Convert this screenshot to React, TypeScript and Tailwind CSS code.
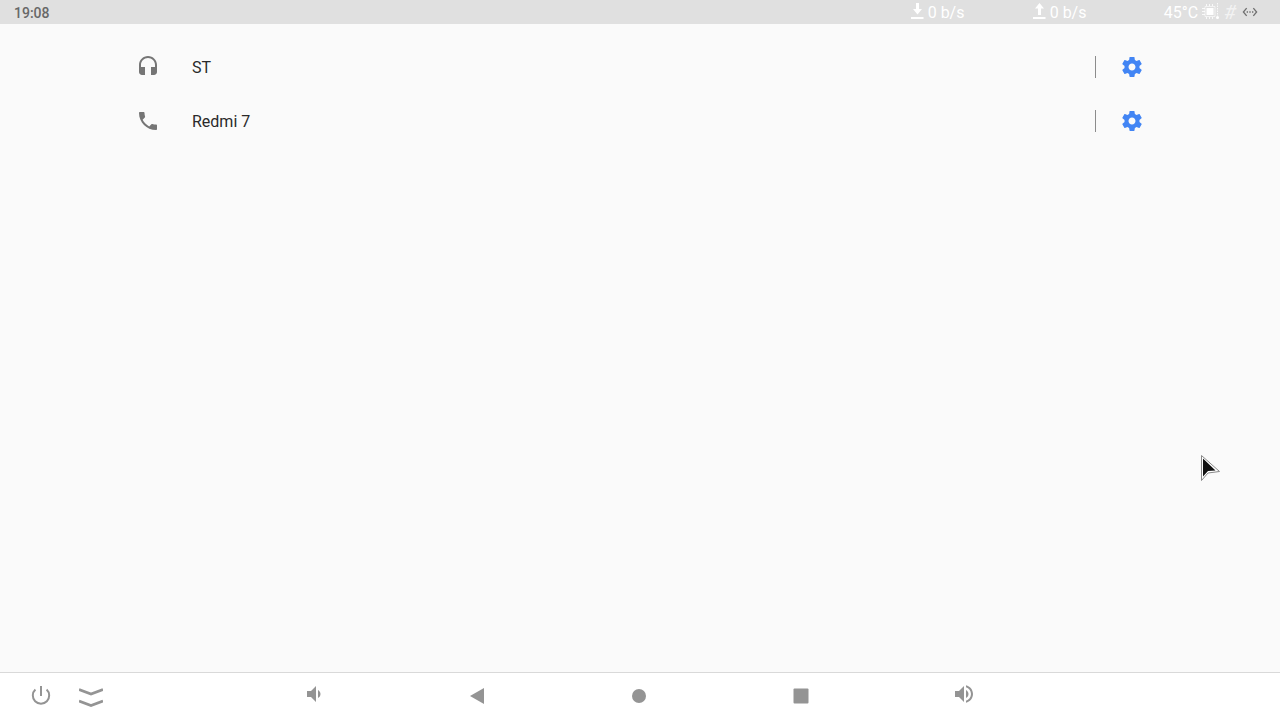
import React from "react";

type Device = {
  name: string;
  icon: string;
};

const HEADSET =
  "M12 1c-4.97 0-9 4.03-9 9v7c0 1.66 1.34 3 3 3h3v-8H5v-2c0-3.87 3.13-7 7-7s7 3.13 7 7v2h-4v8h3c1.66 0 3-1.34 3-3v-7c0-4.97-4.03-9-9-9z";
const PHONE =
  "M6.62 10.79c1.44 2.83 3.76 5.14 6.59 6.59l2.2-2.2c.27-.27.67-.36 1.02-.24 1.12.37 2.33.57 3.57.57.55 0 1 .45 1 1V20c0 .55-.45 1-1 1-9.39 0-17-7.61-17-17 0-.55.45-1 1-1h3.5c.55 0 1 .45 1 1 0 1.25.2 2.45.57 3.57.11.35.03.74-.25 1.02l-2.2 2.2z";
const GEAR =
  "M19.43 12.98c.04-.32.07-.64.07-.98s-.03-.66-.07-.98l2.11-1.65c.19-.15.24-.42.12-.64l-2-3.46c-.12-.22-.39-.3-.61-.22l-2.49 1c-.52-.4-1.08-.73-1.69-.98l-.38-2.65C14.46 2.18 14.25 2 14 2h-4c-.25 0-.46.18-.49.42l-.38 2.65c-.61.25-1.17.59-1.69.98l-2.49-1c-.23-.09-.49 0-.61.22l-2 3.46c-.13.22-.07.49.12.64l2.11 1.65c-.04.32-.07.65-.07.98s.03.66.07.98l-2.11 1.65c-.19.15-.24.42-.12.64l2 3.46c.12.22.39.3.61.22l2.49-1c.52.4 1.08.73 1.69.98l.38 2.65c.03.24.24.42.49.42h4c.25 0 .46-.18.49-.42l.38-2.65c.61-.25 1.17-.59 1.69-.98l2.49 1c.23.09.49 0 .61-.22l2-3.46c.12-.22.07-.49-.12-.64l-2.11-1.65zM12 15.5c-1.93 0-3.5-1.57-3.5-3.5s1.57-3.5 3.5-3.5 3.5 1.57 3.5 3.5-1.57 3.5-3.5 3.5z";
const ETHERNET =
  "M7.77 6.76L6.23 5.48.82 12l5.41 6.52 1.54-1.28L3.42 12l4.35-5.24zM7 13h2v-2H7v2zm10-2h-2v2h2v-2zm-6 2h2v-2h-2v2zm6.77-7.52l-1.54 1.28L20.58 12l-4.35 5.24 1.54 1.28L23.18 12l-5.41-6.52z";
const VOLUME_DOWN =
  "M18.5 12c0-1.77-1.02-3.29-2.5-4.03v8.05c1.48-.73 2.5-2.25 2.5-4.02zM5 9v6h4l5 5V4L9 9H5z";
const VOLUME_UP =
  "M3 9v6h4l5 5V4L7 9H3zm13.5 3c0-1.77-1.02-3.29-2.5-4.03v8.05c1.48-.73 2.5-2.25 2.5-4.02zM14 3.23v2.06c2.89.86 5 3.54 5 6.71s-2.11 5.85-5 6.71v2.06c4.01-.91 7-4.49 7-8.77s-2.99-7.86-7-8.77z";

const DEVICES: Device[] = [
  { name: "ST", icon: HEADSET },
  { name: "Redmi 7", icon: PHONE },
];

function Icon({ d, className = "size-6" }: { d: string; className?: string }) {
  return (
    <svg viewBox="0 0 24 24" fill="currentColor" className={className} aria-hidden="true">
      <path d={d} />
    </svg>
  );
}

function StatusBar() {
  return (
    <header className="flex h-6 items-center justify-between bg-[#e0e0e0] pr-[22px] pl-3.5">
      <span className="pt-px text-sm font-medium text-[#686868]">19:08</span>
      <div className="flex items-center text-base leading-6 text-white">
        <div className="flex w-[122px] items-center gap-1">
          <svg viewBox="0 0 13 18" fill="currentColor" className="h-[18px] w-[13px]" aria-hidden="true">
            <path d="M5 0h3v6h3l-4.5 5.5L2 6h3zM0 14h12.5v2H0z" />
          </svg>
          <span className="pt-px">0 b/s</span>
        </div>
        <div className="flex w-[131px] items-center gap-1">
          <svg viewBox="0 0 13 18" fill="currentColor" className="h-[18px] w-[13px]" aria-hidden="true">
            <path d="M6.5 0L11 5.5H8V12H5V5.5H2zM0 14h12.5v2H0z" />
          </svg>
          <span className="pt-px">0 b/s</span>
        </div>
        <span className="pt-px">45°C</span>
        {/* cpu chip with a thermometer on its right edge */}
        <svg viewBox="0 0 18 20" className="ml-1 h-5 w-[18px]" fill="none" stroke="currentColor" aria-hidden="true">
          <rect x="4.5" y="6" width="7" height="7" fill="currentColor" stroke="none" />
          <path d="M3 4.5h10v10H3z" strokeWidth="1" opacity="0.6" />
          <path d="M4.5 2v2M7.5 2v2M10.5 2v2M4.5 15v2M7.5 15v2M10.5 15v2M0 6.5h3M0 9.5h3M0 12.5h3" strokeWidth="1" opacity="0.8" />
          <path d="M15.5 1v13" strokeWidth="1" strokeDasharray="1.5 1" opacity="0.8" />
          <circle cx="15.5" cy="15.5" r="1.5" fill="currentColor" stroke="none" />
        </svg>
        <span className="ml-1 text-xl leading-6 italic opacity-60">#</span>
        <Icon d={ETHERNET} className="ml-1.5 size-4 text-[#6f6f6f]" />
      </div>
    </header>
  );
}

function DeviceRow({ name, icon }: Device) {
  return (
    <li className="flex h-[54px] items-center">
      <span className="text-[#757575]">
        <Icon d={icon} />
      </span>
      <span className="ml-8 flex-1 pt-0.5 text-base text-[#2a2a2a]">{name}</span>
      <span className="h-[22px] w-px bg-[#8c8c8c]" />
      <button type="button" aria-label={`${name} settings`} className="ml-6 text-[#4285f4]">
        <Icon d={GEAR} />
      </button>
    </li>
  );
}

function NavigationBar() {
  return (
    <nav className="flex h-12 items-center border-t border-[#d9d9d9] bg-white pb-0.5 text-[#949494]">
      <div className="flex w-[233px] items-center gap-[26px] pl-[29px]">
        <button type="button" aria-label="Power">
          <svg viewBox="0 0 24 24" className="size-6" fill="none" stroke="currentColor" strokeWidth="2" aria-hidden="true">
            <path d="M12 2v10M6.4 5.5a8.2 8.2 0 1 0 11.2 0" />
          </svg>
        </button>
        <button type="button" aria-label="Hide bar">
          <svg viewBox="0 0 24 24" className="size-6" fill="none" stroke="currentColor" strokeWidth="2.8" aria-hidden="true">
            <path d="M0 5.5l12 4.5 12-4.5M0 17l12 4.5 12-4.5" />
          </svg>
        </button>
      </div>
      <div className="grid flex-1 grid-cols-5 justify-items-center">
        <button type="button" aria-label="Volume down" className="pb-1">
          <Icon d={VOLUME_DOWN} />
        </button>
        <button type="button" aria-label="Back">
          <Icon d="M5 12L19 4v16z" />
        </button>
        <button type="button" aria-label="Home">
          <Icon d="M12 5a7 7 0 1 0 0 14a7 7 0 1 0 0-14z" />
        </button>
        <button type="button" aria-label="Recent apps">
          <Icon d="M5.5 4.5h13a1 1 0 0 1 1 1v13a1 1 0 0 1-1 1h-13a1 1 0 0 1-1-1v-13a1 1 0 0 1 1-1z" />
        </button>
        <button type="button" aria-label="Volume up" className="pb-1">
          <Icon d={VOLUME_UP} />
        </button>
      </div>
      <div className="w-[235px]" />
    </nav>
  );
}

export default function App() {
  return (
    <div className="relative flex min-h-screen flex-col bg-[#fafafa] font-['Roboto',sans-serif]">
      <StatusBar />
      <main className="flex-1 px-[136px] pt-4">
        <ul>
          {DEVICES.map((device) => (
            <DeviceRow key={device.name} {...device} />
          ))}
        </ul>
      </main>
      <NavigationBar />
      {/* mouse pointer */}
      <svg
        viewBox="0 0 20 28"
        className="pointer-events-none absolute top-[454px] left-[1200px] h-7 w-5"
        aria-hidden="true"
      >
        <path d="M1.5 1.5v25l6.5-7.5 11.5-1.5z" fill="#fff" stroke="#888" strokeWidth="1" />
        <path d="M3 4.5v18l5-5.5 7.5-.5z" fill="#111" />
      </svg>
    </div>
  );
}
